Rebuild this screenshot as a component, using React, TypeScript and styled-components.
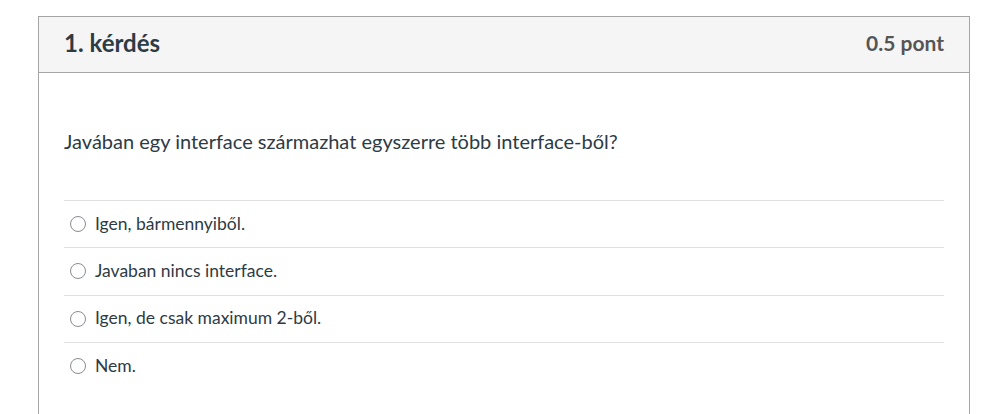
import React from "react";
import styled, { createGlobalStyle } from "styled-components";

const Global = createGlobalStyle`
  html, body { margin: 0; padding: 0; background: #fff; }
  body { font-family: Lato, "Noto Sans", "Liberation Sans", sans-serif; color: #2d3b45; }
`;

const Page = styled.div`
  padding: 16px 37px 0 38px;
`;

const Card = styled.section`
  border: 1px solid #a5a5a5;
  border-bottom: none;
  background: #fff;
  height: 397px;
  overflow: hidden;
`;

const Header = styled.header`
  display: flex;
  align-items: center;
  justify-content: space-between;
  height: 55px;
  padding: 0 25px;
  background: #f5f5f5;
  border-bottom: 1px solid #a5a5a5;
`;

const Title = styled.h2`
  margin: 0;
  font-size: 24px;
  line-height: 1;
  font-weight: 700;
  color: #2d3b45;
  transform: translateY(-2px);
`;

const Points = styled.span`
  font-size: 21px;
  line-height: 1;
  font-weight: 700;
  color: #555;
  transform: translateY(-2px);
`;

const Body = styled.div`
  padding: 53px 25px 0;
`;

const Question = styled.p`
  margin: 0 0 44px;
  font-size: 20px;
  line-height: 30px;
  color: #2d3b45;
`;

const Answers = styled.ul`
  list-style: none;
  margin: 0;
  padding: 0;
`;

const Answer = styled.li`
  display: flex;
  align-items: center;
  gap: 9px;
  height: 47.3px;
  padding: 0 0 2px 6px;
  box-sizing: border-box;
  border-top: 1px solid #e0e0e0;
  font-size: 17.5px;
  color: #2d3b45;
`;

const Radio = styled.span`
  width: 16px;
  height: 16px;
  box-sizing: border-box;
  border: 1.5px solid #888b94;
  border-radius: 50%;
  flex: none;
  transform: translateY(1px);
`;

const answers = [
  "Igen, bármennyiből.",
  "Javaban nincs interface.",
  "Igen, de csak maximum 2-ből.",
  "Nem.",
];

export default function App() {
  return (
    <>
      <Global />
      <Page>
        <Card>
          <Header>
            <Title>1. kérdés</Title>
            <Points>0.5 pont</Points>
          </Header>
          <Body>
            <Question>Javában egy interface származhat egyszerre több interface-ből?</Question>
            <Answers>
              {answers.map((a) => (
                <Answer key={a}>
                  <Radio />
                  {a}
                </Answer>
              ))}
            </Answers>
          </Body>
        </Card>
      </Page>
    </>
  );
}
